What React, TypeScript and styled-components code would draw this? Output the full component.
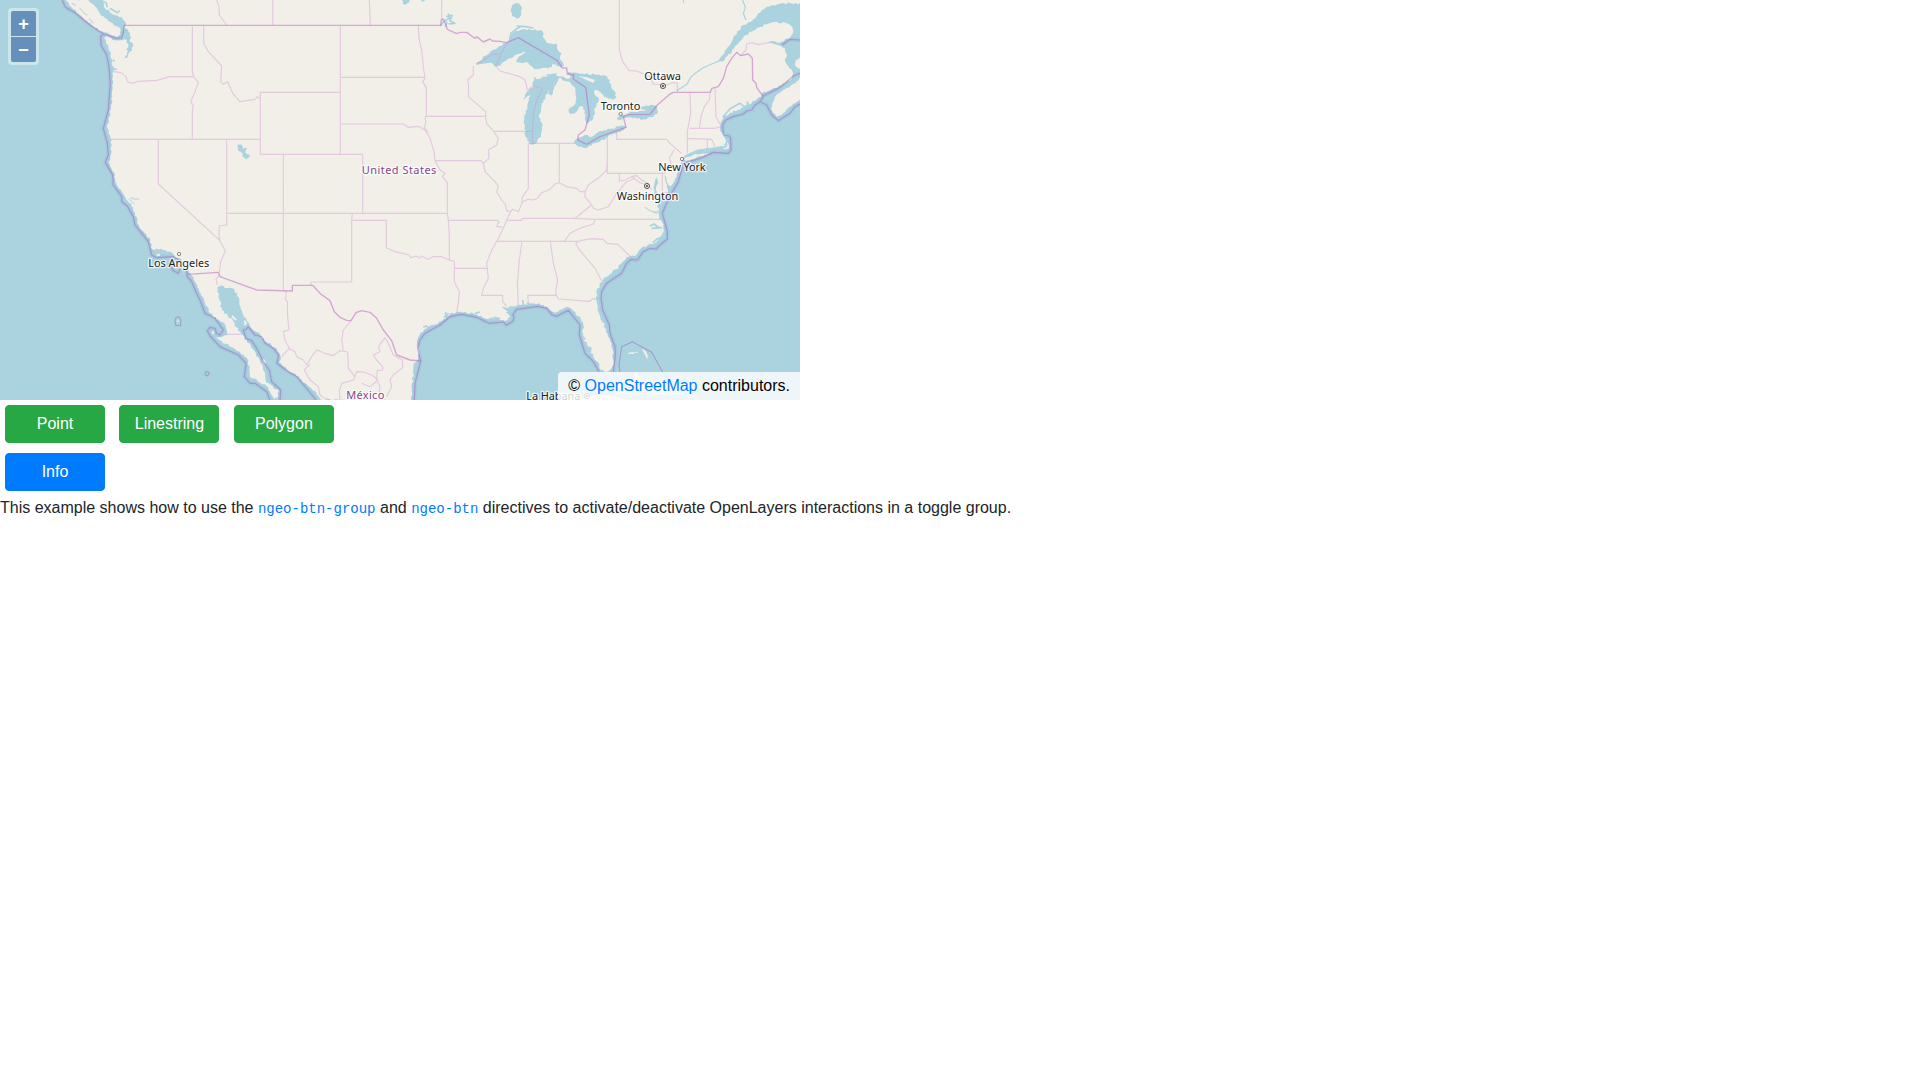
import React from "react";
import styled, { createGlobalStyle } from "styled-components";

const GlobalStyle = createGlobalStyle`
  *, *::before, *::after { box-sizing: border-box; }
  body {
    margin: 0;
    background: #fff;
    color: #212529;
    font-family: "Liberation Sans", Arial, sans-serif;
    font-size: 16px;
    line-height: 1.5;
  }
`;

const MapViewport = styled.div`
  position: relative;
  width: 800px;
  height: 400px;
  overflow: hidden;
  background: #aad3df;
`;

const MapDrawing = styled.svg`
  display: block;
  width: 800px;
  height: 400px;
  font-family: "Noto Sans", sans-serif;
`;

const ZoomControl = styled.div`
  position: absolute;
  top: 8px;
  left: 8px;
  display: flex;
  flex-direction: column;
  gap: 1px;
  padding: 3px;
  border-radius: 4px;
  background: rgba(255, 255, 255, 0.4);
`;

const ZoomButton = styled.button<{ $end: "top" | "bottom" }>`
  display: block;
  width: 25px;
  height: 25px;
  padding: 0;
  border: none;
  border-radius: ${(p) => (p.$end === "top" ? "2px 2px 0 0" : "0 0 2px 2px")};
  background: rgba(0, 60, 136, 0.5);
  color: #fff;
  font: bold 18.24px/25px "Liberation Sans", Arial, sans-serif;
  text-align: center;
`;

const Attribution = styled.div`
  position: absolute;
  right: 0;
  bottom: 0;
  height: 28px;
  padding: 2px 10px;
  border-radius: 4px 0 0;
  background: rgba(255, 255, 255, 0.8);
  color: #000;
  text-shadow: 0 0 2px #fff;
  white-space: nowrap;
`;

const Link = styled.a`
  color: #007bff;
  text-decoration: none;
`;

const ButtonRow = styled.div`
  display: flex;
  gap: 14.45px;
  padding: 5px;
`;

const Button = styled.button<{ $color: string }>`
  width: 100px;
  height: 38px;
  padding: 6px 12px;
  border: 1px solid ${(p) => p.$color};
  border-radius: 4px;
  background: ${(p) => p.$color};
  color: #fff;
  font: 400 16px/24px "Liberation Sans", Arial, sans-serif;
  text-align: center;
`;

const Description = styled.p`
  margin: 0;
`;

const Code = styled.code`
  color: #007bff;
  font-family: "Liberation Mono", "Courier New", monospace;
  font-size: 14px;
`;

/* Breaks straight shore segments into small uneven steps. */
function shore(points: string, amp: number, fixedTail = 0): string {
  const pts = points.trim().split(/\s+/).map((p) => p.split(",").map(Number));
  let seed = 17;
  const rnd = () => {
    seed = (seed * 16807) % 2147483647;
    return seed / 2147483647 - 0.5;
  };
  const out: string[] = [];
  pts.forEach(([x, y], i) => {
    out.push(`${x},${y}`);
    const next = pts[i + 1];
    if (!next || i >= pts.length - 1 - fixedTail) return;
    const dx = next[0] - x;
    const dy = next[1] - y;
    const len = Math.hypot(dx, dy);
    const n = Math.floor(len / 6);
    for (let k = 1; k < n; k++) {
      const off = rnd() * amp;
      out.push(
        `${(x + (dx * k) / n - (dy / len) * off).toFixed(1)},${(y + (dy * k) / n + (dx / len) * off).toFixed(1)}`
      );
    }
  });
  return `M${out.join("L")}Z`;
}

const mainland = `305,0 312,20 335,40 365,52 374,66 376,76 374,90 373,114 362,121 345,121 328,112 318,108 313,115
318,130 326,145 332,165 337,185 340,215 339,250 337,290 331,330 326,360 321,380 325,400 331,415 334,440
332,465 326,485 331,500 343,518 346,545 356,565 372,585 384,604 400,622 406,640 411,670 431,695 451,720
457,748 490,750 520,762 537,775 553,793 566,815 577,828 587,850 602,880 613,905 626,935 650,958 676,975
682,995 680,1004 665,1011 648,1013 665,1024 690,1040 720,1055 743,1078 748,1110 750,1130 775,1145 800,1158
812,1180 822,1197 834,1192 836,1174 818,1158 800,1148 796,1120 782,1090 768,1062 748,1030 722,1002 700,965
666,930 657,895 652,862 662,857 680,865 695,864 712,880 718,915 730,945 740,962 755,985 780,1002 800,1025
830,1045 841,1066 836,1088 860,1108 890,1128 920,1152 950,1182 966,1200 1234,1200 1236,1150 1240,1110
1242,1090 1252,1080 1258,1060 1251,1040 1254,1015 1262,998 1280,985 1300,975 1330,958 1350,941 1380,935
1400,938 1430,943 1460,957 1490,953 1515,963 1534,950 1512,928 1530,918 1560,915 1600,910 1630,914 1650,930
1665,938 1680,930 1700,920 1720,933 1742,955 1750,975 1748,1010 1766,1040 1780,1070 1797,1090 1802,1110
1820,1115 1835,1105 1840,1080 1840,1055 1830,1020 1816,985 1801,950 1791,910 1789,880 1799,850 1818,830
1848,808 1865,790 1880,772 1905,768 1925,743 1960,732 1975,718 1988,700 1990,680 1978,650 1972,620 1984,600
2003,578 2018,552 2030,530 2040,505 2045,478 2070,461 2100,450 2135,448 2160,440 2178,425 2172,410 2162,395
2160,380 2170,352 2190,338 2230,322 2265,302 2283,290 2292,275 2320,265 2355,250 2375,238 2380,220 2368,205
2356,185 2361,165 2355,145 2340,134 2310,126 2345,125 2370,115 2380,95 2374,78 2350,66 2310,69 2270,84
2240,105 2215,130 2195,155 2175,178 2150,189 2150,186 2168,165 2184,140 2200,110 2230,75 2260,58 2275,40
2300,20 2340,11 2400,9 2400,0`;

const islands = [
  "197,0 215,22 240,45 275,75 300,93 330,103 348,111 361,103 360,84 330,66 304,46 284,18 265,0 230,0",
  "2400,232 2385,250 2355,268 2330,284 2320,305 2313,325 2328,350 2345,345 2370,320 2400,298",
  "2400,172 2388,180 2384,192 2394,205 2400,206",
  "2052,477 2080,464 2125,459 2132,455 2120,464 2090,472 2058,483",
  "2156,436 2178,448 2187,444 2184,430 2180,428 2181,440 2165,432",
  "1730,1200 1780,1186 1830,1185 1875,1200",
  "1885,1060 1912,1055 1914,1058 1886,1063",
  "1926,1048 1938,1056 1944,1070 1938,1082 1937,1068",
  "1905,1115 1918,1132 1922,1142 1902,1138",
  "532,962 535,959 536,965 533,967",
];

const lakes = [
  "1428,194 1455,168 1475,152 1500,138 1522,126 1527,112 1540,98 1562,90 1600,89 1625,91 1632,115 1645,130 1671,132 1672,148 1685,160 1680,178 1692,197 1682,203 1655,188 1655,202 1625,204 1600,205 1585,188 1550,187 1556,170 1578,155 1550,163 1520,180 1495,198 1484,200 1470,188",
  "1597,250 1610,237 1635,230 1665,222 1682,232 1662,252 1655,287 1648,282 1646,268 1636,290 1625,318 1617,345 1628,375 1623,410 1605,432 1590,433 1577,410 1573,360 1582,320 1592,284 1570,299 1580,275 1600,262",
  "1678,230 1700,236 1712,232 1703,215 1735,219 1790,225 1822,230 1834,258 1850,292 1838,300 1815,292 1800,275 1784,270 1782,277 1797,298 1785,325 1780,355 1765,368 1758,371 1757,345 1750,320 1738,320 1725,340 1711,342 1706,328 1727,310 1728,290 1725,262 1710,246 1690,242",
  "1722,428 1735,413 1755,404 1770,412 1800,393 1830,387 1870,377 1880,381 1865,392 1825,408 1800,425 1785,430 1758,445 1735,440",
  "1850,358 1865,345 1885,340 1900,335 1938,331 1905,326 1925,320 1960,316 1972,322 1971,342 1955,352 1930,358 1880,352 1862,361",
  "1537,15 1546,10 1560,14 1566,26 1564,45 1550,56 1536,48 1532,30",
  "712,435 722,433 728,447 742,444 736,458 750,465 738,478 728,470 727,460 715,453",
  "1206,0 1208,12 1218,14 1228,7 1229,0",
  "1262,0 1268,6 1276,0",
  "376,84 386,95 394,112 389,125 398,130 396,152 386,160 382,173 373,174 384,152 379,148 385,140 380,120 366,116",
  "285,5 302,12 310,32 338,46 366,54 378,72 374,90 340,68 318,52 304,48",
  "1968,532 1973,540 1968,562 1974,585 1966,590 1960,565",
  "1994,526 2000,546 2016,562 2006,580 1997,548",
];

const inlets =
  "M1322,78L1330,66L1348,55L1345,40M1338,50L1356,46L1350,62L1364,70L1345,72M1342,66L1335,80M300,0L318,8L322,22M330,25L352,38L360,32M270,0L290,8M338,180L344,184M339,206L350,208M1338,936L1336,945M1332,952L1346,940M1270,982L1278,978L1288,984M1425,940L1440,936M1508,922L1530,930L1520,940M1568,900L1570,914M1480,952L1500,956M1584,908L1588,916M1748,1010L1756,1018M1762,1042L1775,1045M1955,685L1985,683M1950,678L1962,672L1980,686M1958,728L1972,716L1985,714M1550,78L1574,80L1600,84M1530,102L1548,88L1562,80M1608,250L1604,232M1646,282L1670,246M1640,226L1670,222M1240,1108L1252,1106M1238,1130L1244,1150M790,1085L796,1108M2168,352L2190,326L2220,310L2235,322M2240,304L2248,318M2055,468L2095,451L2180,440M2374,180L2384,205L2400,215M2366,170L2372,190L2382,220M2310,125L2350,138";

const fineInlets =
  "M391,595L400,593M388,598L404,612M398,597L418,597M215,10L228,16M250,38L262,46M240,25L250,36M268,55L280,70M1935,622L1950,632L1972,640M1960,637L1976,634M2050,0L2052,10";

const river =
  "M2158,182L2135,192L2110,203L2088,218L2072,232L2062,252L2030,272M2228,0L2236,22L2230,40L2238,60";

const stateLines = `M577,78V215L580,228M342,215L362,218 378,230 382,245 398,250 415,244 470,241 510,230 580,229
L595,247 585,275 572,305 580,318 577,330V418M330,418H782M611,78V130L625,155 665,198 662,245 670,253 683,245
698,280 720,305 765,298 772,290 782,298M781,277H1021M781,277V463H1088V640M475,418V552L660,722
M680,418V675L658,678 657,705 660,722 676,753 662,785 658,818M650,0L657,20 658,45 680,75M818,0V75M1108,0L1111,75
M1325,0V60M1021,78V463M1021,232H1275M1255,78L1257,115 1265,150 1270,200 1275,235 1268,245 1279,263V348
M1021,372H1210L1225,382 1255,379 1275,390 1290,415 1302,455 1305,482M1279,348L1275,355 1278,365 1273,383 1285,397
M1275,349H1457M850,463V870M680,640H1342M1305,482H1443L1450,490M1305,482L1320,510 1335,520 1327,530 1342,547V640
L1345,661 1348,705V780M1057,640L1055,661H1159V743L1185,755 1228,765 1233,773 1248,768 1260,774 1265,768 1283,778
1300,770 1325,770 1348,780 1363,784M1055,661V846H933V856M1345,661H1490L1497,666 1490,679 1508,682
M1363,784V845L1378,875 1375,910 1370,937M1363,805H1460M1457,349L1460,370 1480,393 1495,415 1490,435 1465,450
1467,475 1450,490 1455,515 1485,545 1495,558 1490,575 1505,600 1517,615 1519,632 1532,635 1520,660 1510,685 1490,725 1475,750
1460,790 1465,835 1450,865 1445,886H1508V905L1520,918M1566,724L1558,780 1552,850 1555,912M1651,724L1660,790
1673,840 1667,870 1669,886H1583L1585,905 1580,912M1669,886L1675,897 1770,904 1778,896 1792,897M1490,724H1733
M1693,724L1710,700 1740,685 1780,672 1785,658M1518,661H1565L1568,655H1720L1785,658H1980M1727,730L1740,722
1775,716 1810,718 1820,730 1853,733 1892,770M1727,730L1735,745 1760,775 1785,805 1805,843M1725,655L1775,615
1755,590 1755,575M1775,615L1780,625 1795,630 1825,620 1838,600 1850,580 1880,545 1905,535M1532,635L1538,628 1555,635
1568,605 1585,598 1600,600 1612,595 1625,578 1650,568 1665,552 1678,548 1700,560 1730,565 1740,575 1755,575 1765,555
1800,530 1820,510 1822,480M1585,430V565L1568,590 1565,605M1678,430V548M1585,430H1725M1480,394H1600
M1420,198V225L1403,240 1406,255 1405,290 1440,320 1457,335V349M1487,198L1500,213 1560,230 1575,240 1583,270 1600,258
1628,265 1610,300 1600,345 1597,430M1430,193L1478,163H1500M1520,128L1487,198M1822,405V520H1995M1850,395V418H2000
L2010,430 2045,460M2022,450L2008,475 2015,495 1998,510 1993,522M1858,520V543L1875,540 1895,530 1910,527 1925,540 1940,548
1955,570M1895,530L1920,548 1935,553M2070,277L2072,340 2062,395V460M2130,280L2128,300 2113,320 2103,350 2098,383
M2145,265L2148,350 2160,372M2070,385H2145L2160,380M2062,415L2135,418 2145,440M2122,418V448M1858,0V150L1868,185
1888,212 1910,213 1950,230 1960,252 2000,255 2020,247 2032,250V275M2222,167L2238,150 2240,132 2255,128 2275,134
2310,127M1987,522V578H2008M658,825L648,838 652,855M675,1003H722M858,873V885L857,900 862,905 863,950 867,990
850,995 855,1020 868,1045 845,1070M868,1045L885,1055 890,1070 910,1080 920,1095 935,1070 950,1050 975,1060
1000,1067 1020,1052 1043,1056M1053,962L1030,990 1025,1020 1030,1050M1043,1056L1045,1105 1065,1130 1070,1115 1090,1116
1115,1125 1135,1140M930,1092L913,1110 930,1140 955,1160 960,1185 970,1193 990,1200M1155,1013L1135,1040 1140,1055
1120,1065 1130,1080 1148,1100 1148,1110 1132,1112 1130,1140 1140,1160 1137,1185 1150,1200M1155,1013L1165,1030
1180,1065 1207,1080 1208,1103 1180,1125 1170,1140 1175,1160 1160,1190M1065,1130L1060,1140 1025,1150 1018,1175 1020,1200
M1135,1140L1110,1160 1085,1150`;

const countryLines = `M372,76H1322L1324,60 1330,57 1338,75 1342,88 1370,101 1380,97 1400,97 1415,108 1425,115 1430,110 1450,126
1470,117 1478,123 1500,124 1520,128 1555,113 1672,182 1688,205 1700,203 1702,222 1722,225 1720,237 1757,262 1768,345 1755,390
1735,405 1733,420 1760,433 1800,410 1878,382 1870,350 1885,344 1950,343 1972,315 2010,282 2020,277 2130,277
2136,265 2155,260 2170,235 2180,200 2195,175 2210,157 2222,167 2245,162 2257,175 2258,240 2268,250 2270,262 2290,290
M562,823L655,817 660,830 770,870 877,873V856H938L962,882 990,902 1003,935 1020,952 1040,961 1053,962 1068,938 1085,932
1110,937 1130,955 1150,990 1175,1022 1190,1065 1230,1080 1262,1083`;

const maritimeLines = `M187,0L196,22 225,38 270,75 310,102 350,115 365,113 370,100 372,76M310,102L302,110 303,135
320,165 327,200 331,250 325,330 310,385 322,430 325,465 316,487 338,525 340,555 365,590 365,605 382,618 400,650
405,675 445,725 455,765 470,773 520,770 550,788M505,790L520,812 535,820 540,808M560,812L562,830 575,845 590,880
602,905 615,940 645,955 670,990 660,1005 650,1000 645,985 630,982 622,992 630,1008 660,1040 715,1065 738,1090
733,1130 750,1150 765,1150 800,1175 810,1200M840,1200L842,1170 815,1145 808,1110 790,1085 770,1045 755,1022
738,1015 730,990 738,988 745,981 765,1005 785,1010 795,1030 820,1045 836,1065 831,1090 850,1105 890,1130
920,1165 948,1200M1243,1200L1245,1150 1262,1083 1253,1045 1260,1020 1275,1000 1320,975 1350,950 1385,943
1430,952 1467,970 1510,966 1520,976 1540,962 1542,950 1538,945 1550,928 1615,919 1640,925 1657,945 1670,949 1705,931
1740,975 1738,1005 1755,1060 1780,1085 1797,1115M1840,1116L1846,1065 1845,1040 1830,1000 1828,975 1808,930
1803,895 1805,875 1820,850 1865,820 1880,790 1893,778 1912,780 1930,755 1950,745 1968,747 1980,735 2002,717
2002,695 1987,640 2000,610 2018,575 2035,545 2045,510 2050,490 2100,475 2140,457 2185,460 2193,450 2192,415
2188,408 2170,405 2168,375 2178,360 2200,350 2230,342 2240,333 2255,330 2265,315 2280,305 2290,290M2280,305L2300,315
2315,345 2335,362 2370,340 2385,320 2400,312M2400,120L2370,118 2345,136M2400,220L2380,228 2340,262 2290,288`;

const offshoreLines = `M1860,1115L1857,1095 1865,1040 1897,1025 1955,1057 1990,1120 2060,1185M528,953L536,950 543,960
541,977 527,976 525,962ZM618,1114L628,1118 623,1128 615,1124Z`;

interface Place {
  name: string;
  x: number;
  y: number;
  width: number;
  country?: boolean;
  faint?: boolean;
  dot?: [number, number];
  capital?: boolean;
}

const places: Place[] = [
  { name: "Los Angeles", x: 445, y: 800, width: 183, dot: [537, 762] },
  { name: "Ottawa", x: 1933, y: 239, width: 110, dot: [1989, 258], capital: true },
  { name: "Toronto", x: 1802, y: 330, width: 119, dot: [1862, 342] },
  { name: "New York", x: 1975, y: 512, width: 142, dot: [2046, 477] },
  { name: "Washington", x: 1850, y: 600, width: 185, dot: [1941, 558], capital: true },
  { name: "La Habana", x: 1579, y: 1200, width: 162, dot: [1761, 1188], capital: true },
  { name: "The Bahamas", x: 1842, y: 1180, width: 210, country: true, faint: true },
  { name: "United States", x: 1085, y: 521, width: 224, country: true },
  { name: "México", x: 1039, y: 1196, width: 114, country: true },
];

function PlaceMark({ place }: { place: Place }) {
  return (
    <g>
      {place.dot && (
        <circle
          cx={place.dot[0]}
          cy={place.dot[1]}
          r={place.capital ? 7.5 : 5}
          fill="#f5f3ee"
          stroke={place.capital ? "#4d4d48" : "#75756f"}
          strokeWidth={place.capital ? 3 : 2.5}
        />
      )}
      {place.dot && place.capital && <circle cx={place.dot[0]} cy={place.dot[1]} r={3.2} fill="#4d4d48" />}
      <text
        x={place.x}
        y={place.y}
        textLength={place.width}
        fontSize={33}
        fill={place.country ? "#85468a" : "#222"}
        fillOpacity={place.faint ? 0.3 : 1}
        stroke="#fff"
        strokeOpacity={0.7}
        strokeWidth={8}
        strokeLinejoin="round"
        paintOrder="stroke"
      >
        {place.name}
      </text>
    </g>
  );
}

function BaseMap() {
  return (
    <MapDrawing viewBox="0 0 2400 1200" fill="none" strokeLinejoin="round">
      <path d={maritimeLines} stroke="#8fa6d6" strokeOpacity={0.2} strokeWidth={13} />
      <path d={shore(mainland, 7, 1)} fill="#f2efe9" />
      {islands.map((d) => (
        <path key={d} d={shore(d, 4)} fill="#f2efe9" />
      ))}
      {lakes.map((d) => (
        <path key={d} d={shore(d, 6)} fill="#aad3df" />
      ))}
      <path d={inlets} stroke="#aad3df" strokeWidth={5} />
      <path d={fineInlets} stroke="#aad3df" strokeWidth={3} />
      <path d={river} stroke="#aad3df" strokeWidth={3.5} />
      <path d="M1735,228L1760,232 1785,240 1780,249 1760,240Z" fill="#f2efe9" />
      <path
        d="M696,948L708,960M733,962L738,970 733,975M470,766L480,764M790,1078L795,1090M640,994L638,1002"
        stroke="#f2efe9"
        strokeWidth={6}
      />
      <path d={stateLines} stroke="#cf96d0" strokeOpacity={0.42} strokeWidth={3.4} />
      <path d={countryLines} stroke="#b968c0" strokeOpacity={0.52} strokeWidth={4.2} />
      <path d={maritimeLines} stroke="#a276c0" strokeOpacity={0.58} strokeWidth={3.6} />
      <path d={offshoreLines} stroke="#a276c0" strokeOpacity={0.58} strokeWidth={3.4} />
      {places.map((p) => (
        <PlaceMark key={p.name} place={p} />
      ))}
    </MapDrawing>
  );
}

export default function App() {
  return (
    <>
      <GlobalStyle />
      <MapViewport>
        <BaseMap />
        <ZoomControl>
          <ZoomButton $end="top">+</ZoomButton>
          <ZoomButton $end="bottom">−</ZoomButton>
        </ZoomControl>
        <Attribution>
          © <Link>OpenStreetMap</Link> contributors.
        </Attribution>
      </MapViewport>
      <ButtonRow>
        <Button $color="#28a745">Point</Button>
        <Button $color="#28a745">Linestring</Button>
        <Button $color="#28a745">Polygon</Button>
      </ButtonRow>
      <ButtonRow>
        <Button $color="#007bff">Info</Button>
      </ButtonRow>
      <Description>
        This example shows how to use the <Code>ngeo-btn-group</Code> and <Code>ngeo-btn</Code> directives to
        activate/deactivate OpenLayers interactions in a toggle group.
      </Description>
    </>
  );
}
